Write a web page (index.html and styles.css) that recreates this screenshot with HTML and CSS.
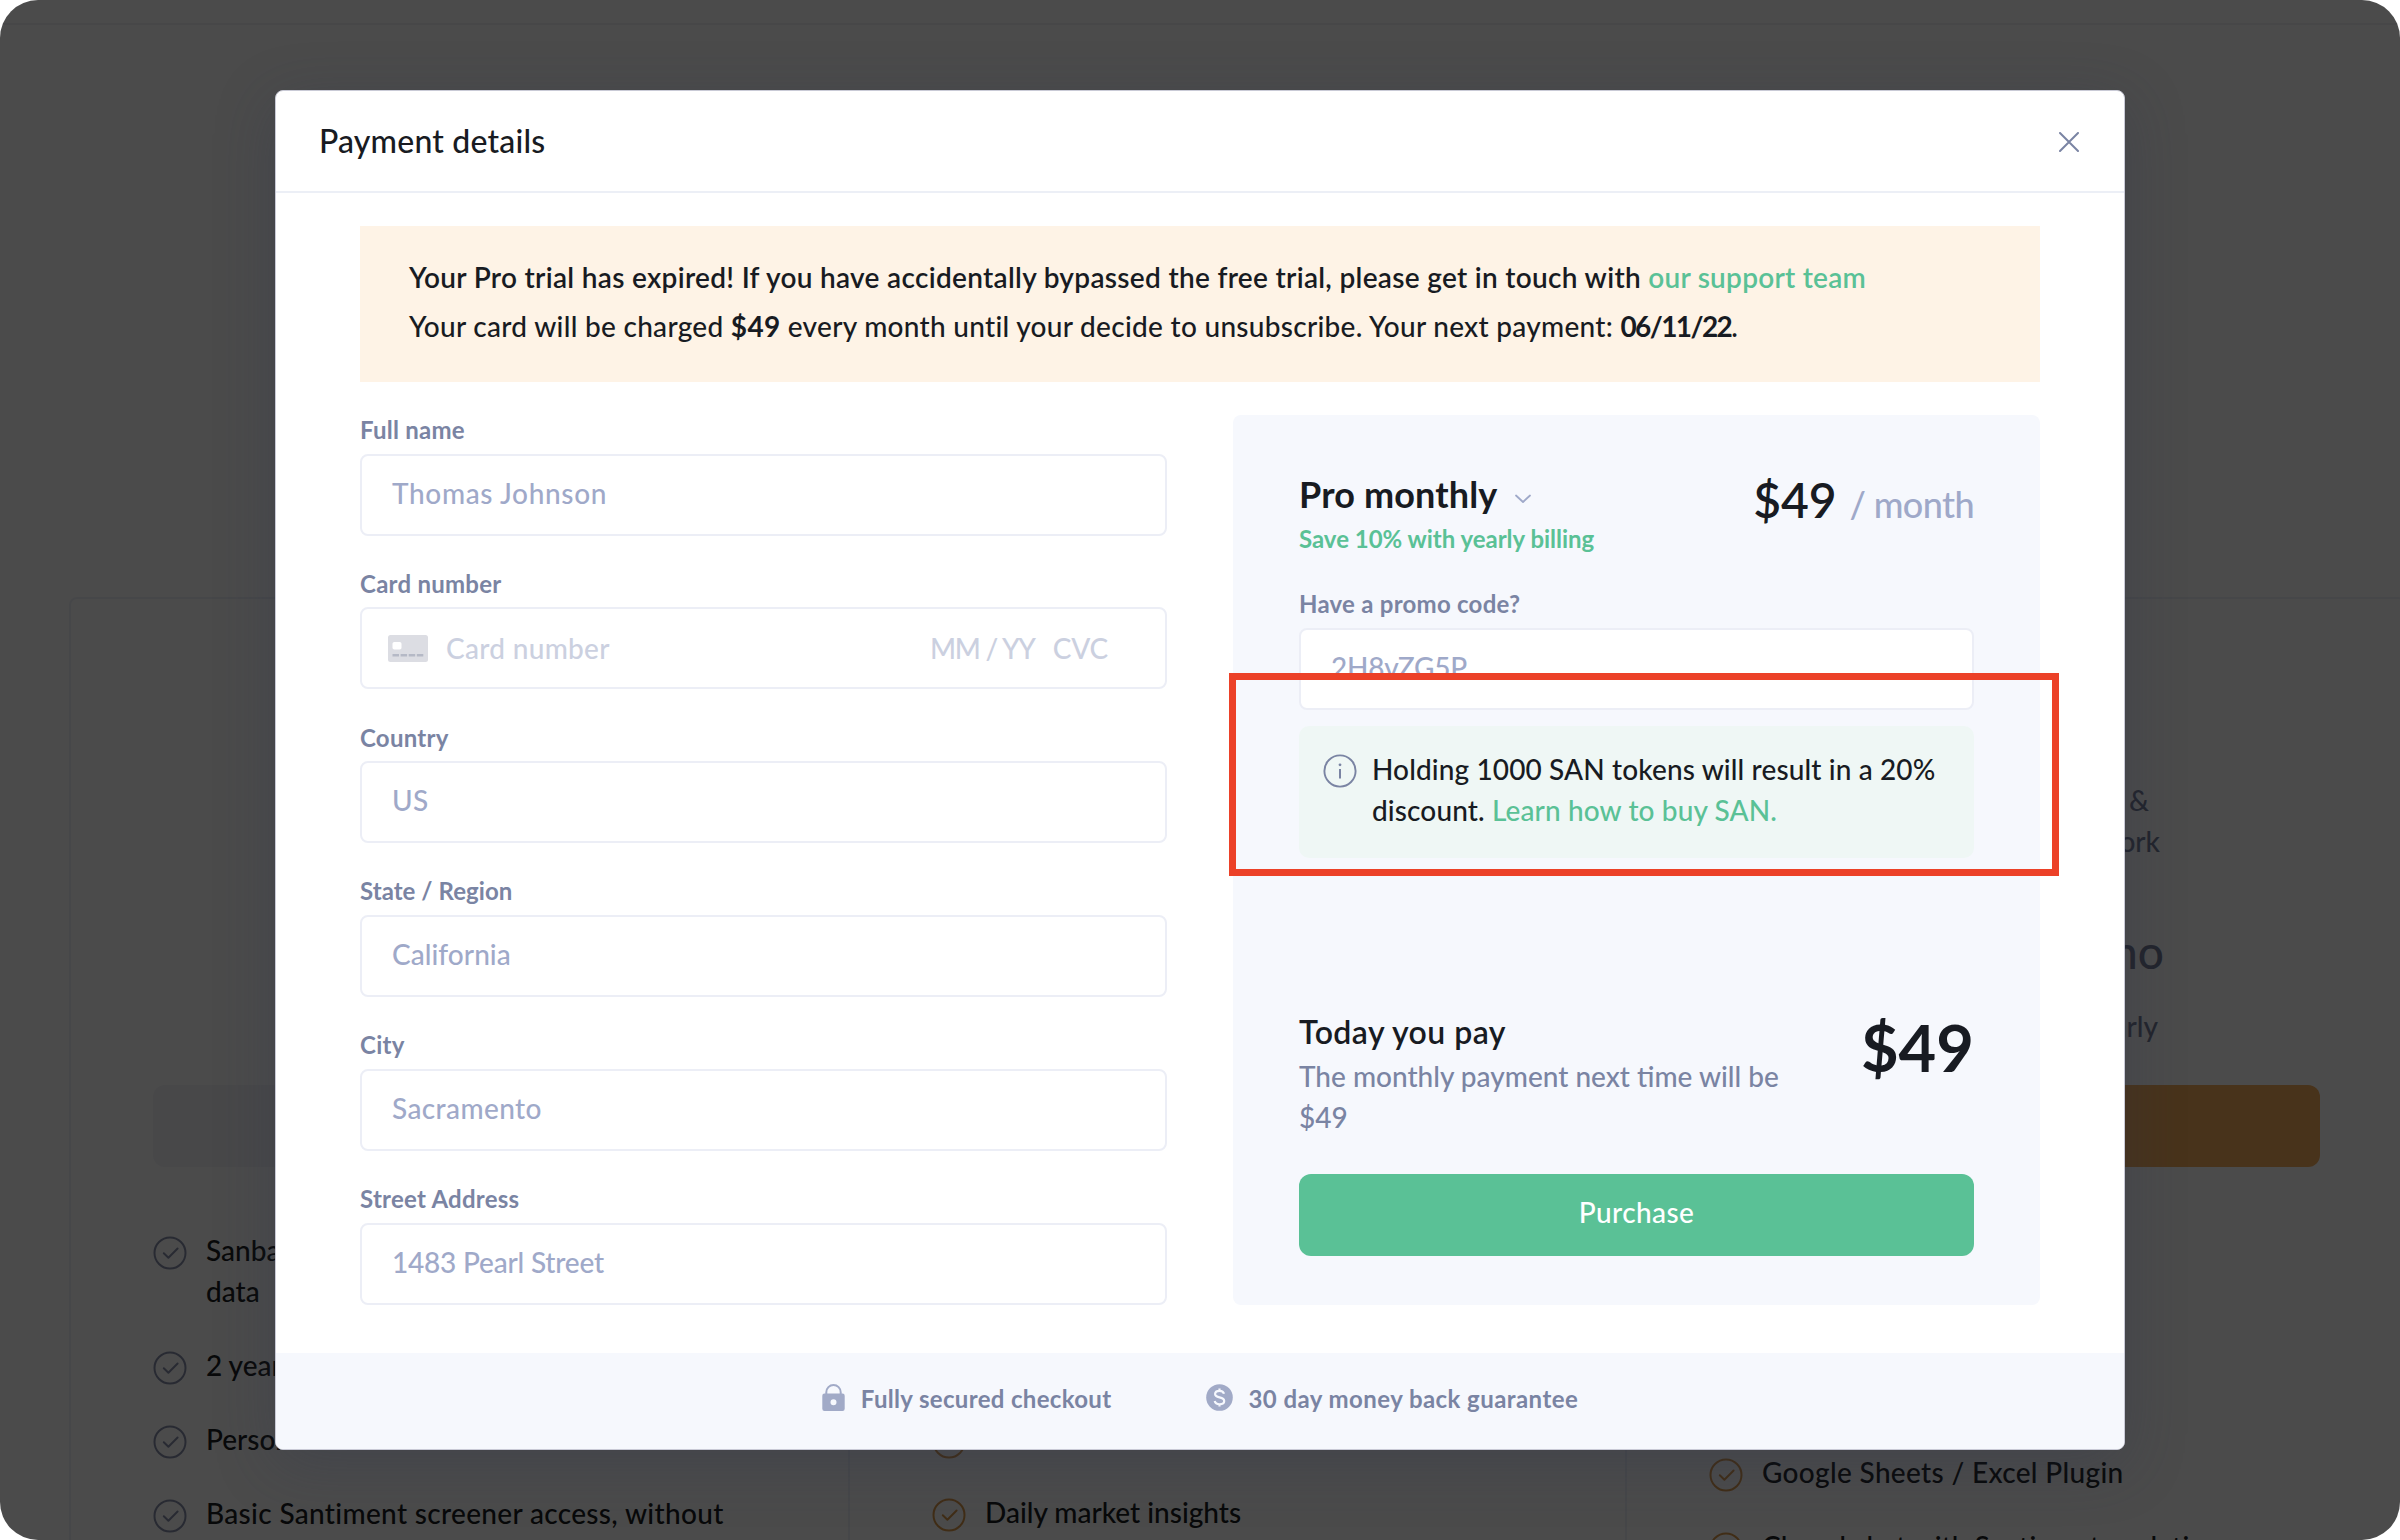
FILE: index.html
```html
<!DOCTYPE html>
<html lang="en">
<head>
<meta charset="utf-8">
<title>Payment details</title>
<link rel="stylesheet" href="styles.css">
</head>
<body>
<svg class="defs" width="0" height="0" aria-hidden="true">
  <symbol id="check" viewBox="0 0 34 34"><circle cx="17" cy="17" r="15.5" fill="none" stroke="currentColor" stroke-width="2"/><path d="M10.8 17.3l4.6 4.4 9.2-9.2" fill="none" stroke="currentColor" stroke-width="2" stroke-linecap="round" stroke-linejoin="round"/></symbol>
</svg>
<div class="stage">
  <div class="page">
    <div class="topbar"></div>
    <div class="plans">
      <section class="plan">
        <div class="plan-head"></div>
        <div class="plan-btn muted"></div>
        <ul class="features">
          <li><svg class="tick"><use href="#check"/></svg><span>Sanbase<br>data</span></li>
          <li><svg class="tick"><use href="#check"/></svg><span>2 years</span></li>
          <li><svg class="tick"><use href="#check"/></svg><span>Personal</span></li>
          <li><svg class="tick"><use href="#check"/></svg><span class="ls-basic">Basic Santiment screener access, without</span></li>
        </ul>
      </section>
      <section class="plan">
        <div class="plan-head"></div>
        <div class="plan-btn accent"></div>
        <ul class="features orange from-third">
          <li><svg class="tick"><use href="#check"/></svg><span></span></li>
          <li><svg class="tick"><use href="#check"/></svg><span>Daily market insights</span></li>
        </ul>
      </section>
      <section class="plan">
        <div class="plan-head">
          <p class="about">&amp;</p>
          <p class="about second">work</p>
          <p class="price-line">demo</p>
          <p class="about billing">yearly</p>
        </div>
        <div class="plan-btn accent"></div>
        <ul class="features orange from-fourth">
          <li><svg class="tick"><use href="#check"/></svg><span class="ls-basic">Google Sheets / Excel Plugin</span></li>
          <li><svg class="tick"><use href="#check"/></svg><span>Closed chat with Santiment analytics</span></li>
        </ul>
      </section>
    </div>
  </div>
  <div class="backdrop">
    <div class="modal">
      <header class="modal-head">
        <h1>Payment details</h1>
        <svg class="close" viewBox="0 0 20 20"><path d="M1 1l18 18M19 1L1 19" fill="none" stroke="#7a84a3" stroke-width="2" stroke-linecap="round"/></svg>
      </header>
      <div class="modal-body">
        <div class="notice">
          <p class="notice-main">Your Pro trial has expired! If you have accidentally bypassed the free trial, please get in touch with <a>our support team</a></p>
          <p class="notice-sub">Your card will be charged <b>$49</b> every month until your decide to unsubscribe. Your next payment: <b class="date">06/11/22</b>.</p>
        </div>
        <div class="columns">
          <form class="fields">
            <div class="field"><label>Full name</label><div class="input name">Thomas Johnson</div></div>
            <div class="field"><label>Card number</label>
              <div class="input card">
                <svg class="card-icon" viewBox="0 0 40 27"><rect width="40" height="27" rx="2.5" fill="#dcdde3"/><rect x="4.500" y="7" width="9" height="7.500" rx="1.800" fill="#fff"/><path d="M4.500 20.200h31" fill="none" stroke="#b5b9c6" stroke-width="2.600" stroke-dasharray="6.500 1.600"/></svg>
                <span class="card-no">Card number</span><span class="card-date">MM / YY</span><span class="card-cvc">CVC</span>
              </div></div>
            <div class="field"><label>Country</label><div class="input">US</div></div>
            <div class="field"><label class="tight">State / Region</label><div class="input tight">California</div></div>
            <div class="field"><label>City</label><div class="input">Sacramento</div></div>
            <div class="field"><label>Street Address</label><div class="input street">1483 Pearl Street</div></div>
          </form>
          <aside class="summary">
            <div class="plan-row">
              <div>
                <div class="plan-name"><span>Pro monthly</span><svg class="chev" viewBox="0 0 16 10"><path d="M1 1.500l7 6.500 7-6.500" fill="none" stroke="#9fa9c9" stroke-width="1.800" stroke-linecap="round" stroke-linejoin="round"/></svg></div>
                <p class="save">Save 10% with yearly billing</p>
              </div>
              <div class="price">$49<span>/ month</span></div>
            </div>
            <div class="field promo"><label>Have a promo code?</label><div class="input code">2H8vZG5P</div></div>
            <div class="info">
              <svg class="info-icon" viewBox="0 0 34 34"><circle cx="17" cy="17" r="15.600" fill="none" stroke="#7a84a3" stroke-width="1.900"/><path d="M17 15v9.500" stroke="#7a84a3" stroke-width="2"/><circle cx="17" cy="10.800" r="1.400" fill="#7a84a3"/></svg>
              <p>Holding 1000 SAN tokens will result in a 20%<br>discount. <a>Learn how to buy SAN.</a></p>
            </div>
            <div class="total">
              <div>
                <h2>Today you pay</h2>
                <p class="next">The monthly payment next time will be<br>$49</p>
              </div>
              <strong>$49</strong>
            </div>
            <button class="buy" type="button">Purchase</button>
          </aside>
        </div>
      </div>
      <footer class="modal-foot">
        <div class="perk">
          <svg class="lock" viewBox="0 0 23 27"><path d="M4.300 11V8.200a7.200 7.200 0 0 1 14.400 0V11" fill="none" stroke="#a1aac7" stroke-width="2"/><path fill-rule="evenodd" d="M2.500 9.600h18a2.200 2.200 0 0 1 2.200 2.200v13a2.200 2.200 0 0 1-2.200 2.200h-18a2.200 2.200 0 0 1-2.200-2.200v-13a2.200 2.200 0 0 1 2.200-2.200zM11.500 15.300a3 3 0 1 0 0 6 3 3 0 0 0 0-6z" fill="#a1aac7"/></svg>
          <span class="perk-a">Fully secured checkout</span>
        </div>
        <div class="perk">
          <svg class="coin" viewBox="0 0 27 27"><circle cx="13.500" cy="13.500" r="13.300" fill="#a1aac7"/><path d="M18 9.800c-.5-2-2.200-3-4.500-3-2.600 0-4.400 1.200-4.400 3.200 0 2.200 2 2.800 4.400 3.400 2.600.6 4.700 1.300 4.700 3.600 0 2-1.900 3.300-4.700 3.300-2.500 0-4.300-1.100-4.800-3.200M13.500 4.500v2.500M13.500 20v2.600" fill="none" stroke="#f6f8fd" stroke-width="2.200"/></svg>
          <span class="perk-b">30 day money back guarantee</span>
        </div>
      </footer>
    </div>
  </div>
  <div class="marker"></div>
</div>
</body>
</html>
```
FILE: styles.css
```css
* { box-sizing: border-box; }
body { margin: 0; background: #fff; font-family: Lato, "Liberation Sans", sans-serif; font-size: 28px; font-weight: 500; color: #181b22; }
h1, h2, p, ul { margin: 0; padding: 0; font-weight: inherit; }
li { list-style: none; }
svg { display: block; flex: none; }
.defs { position: absolute; }
a { color: #5ac196; }

.stage { position: relative; width: 2400px; height: 1540px; overflow: hidden; border-radius: 38px; background: #fcfcfc; }
.page { width: 2406px; }
.topbar { height: 25px; border-bottom: 2px solid #efeff2; }
.plans { display: grid; grid-template-columns: 777px 777px 782px; margin: 572px 0 0 69px; border: 2px solid #eceef4; border-radius: 8px; height: 1000px; }
.plan { padding: 0 84px 0 82px; }
.plan + .plan { border-left: 2px solid #eceef4; }
.plan:last-child { padding-right: 87px; }
.plan-head { height: 486px; padding-top: 181px; text-align: right; color: #737b95; line-height: 41px; }
.about { padding-right: 171px; }
.second { padding-right: 160px; }
.price-line { font-size: 46px; line-height: 60px; margin-top: 60px; padding-right: 156px; }
.billing { margin-top: 24px; padding-right: 162px; }
.plan-btn { height: 82px; border-radius: 12px; }
.muted { background: #f0f0f5; }
.accent { background: #f0aa5a; }
.features { margin-top: 63px; display: flex; flex-direction: column; gap: 33px; line-height: 41px; }
.features li { display: flex; gap: 19px; white-space: nowrap; color: #1c1e24; }
.tick { width: 34px; height: 34px; margin-top: 6px; color: #868da8; }
.orange .tick { color: #d8964a; }
.from-third { margin-top: 252px; }
.from-fourth { margin-top: 285px; }
.ls-basic { letter-spacing: .33px; }

.backdrop { position: absolute; inset: 0; background: rgba(0, 0, 0, .7); padding: 90px 275px; }
.modal { width: 1850px; height: 1360px; border: 1px solid #c9cad6; border-radius: 8px; background: #fff; overflow: hidden; box-shadow: 0 14px 60px rgba(47, 53, 77, .3); }
.modal-head { height: 102px; padding: 0 45px 1px 43px; border-bottom: 2px solid #eceff6; display: flex; align-items: center; justify-content: space-between; }
h1 { font-size: 32px; letter-spacing: .2px; }
.close { width: 20px; height: 20px; margin-top: 2px; }
.modal-body { height: 1160px; padding: 33px 84px 0 84px; }
.notice { height: 156px; background: #fef3e6; padding: 27px 0 0 49px; line-height: 49px; white-space: nowrap; }
.notice-main { font-weight: 600; letter-spacing: .31px; }
.notice-main a { font-weight: 600; letter-spacing: .25px; }
.notice-sub { letter-spacing: .29px; }
.notice-sub b { font-weight: 700; }
.date { letter-spacing: -1.6px; }
.columns { display: grid; grid-template-columns: 807px 807px; gap: 66px; margin-top: 33px; height: 889px; }
.fields { display: flex; flex-direction: column; gap: 33.2px; }
.field label { display: block; height: 38.6px; padding-top: 1px; font-size: 24px; line-height: 28px; font-weight: 700; letter-spacing: .25px; color: #7a84a3; }
.input { height: 82px; border: 2px solid #eceef6; border-radius: 8px; background: #fff; padding: 0 30px 4px; display: flex; align-items: center; color: #9fa9c9; letter-spacing: .4px; }
.name { letter-spacing: .65px; }
.street { letter-spacing: -.2px; }
.field .tight { letter-spacing: .05px; }
.card { padding: 0 57px 0 26px; color: #cbd0e0; }
.card-icon { width: 40px; height: 27px; margin-top: 1px; }
.card-no { margin-left: 18px; letter-spacing: .3px; }
.card-date { margin-left: auto; letter-spacing: -1.2px; }
.card-cvc { margin-left: 18px; letter-spacing: -.2px; }

.summary { background: #f6f8fd; border-radius: 8px; padding: 57px 66px 49px; display: flex; flex-direction: column; }
.plan-row { display: flex; justify-content: space-between; height: 117px; }
.plan-name { display: flex; align-items: center; gap: 17px; font-size: 36px; font-weight: 700; line-height: 44px; letter-spacing: .15px; }
.chev { width: 16px; height: 10px; margin-top: 9px; }
.save { font-size: 24px; line-height: 30px; font-weight: 700; color: #5ac196; margin-top: 8px; letter-spacing: -.02px; }
.price { font-size: 48px; line-height: 58px; margin-top: -1px; letter-spacing: -.1px; font-weight: 600; }
.price span { font-size: 36px; color: #9fa9c9; margin-left: 13px; letter-spacing: -.6px; font-weight: 500; }
.code { letter-spacing: -.2px; }
.info { margin-top: 16px; height: 132px; border-radius: 10px; background: #eff7f5; padding: 23px 0 0 24px; display: flex; gap: 15px; line-height: 41px; white-space: nowrap; }
.info-icon { width: 34px; height: 34px; margin-top: 5px; }
.info p { letter-spacing: .12px; }
.total { margin-top: auto; display: flex; justify-content: space-between; height: 163px; }
h2 { font-size: 32px; line-height: 40px; font-weight: 600; letter-spacing: .45px; padding-top: 1px; }
.next { margin-top: 4px; line-height: 41px; color: #7a84a3; }
.total strong { font-size: 65px; line-height: 64px; font-weight: 700; margin-top: 4px; }
.buy { height: 82px; border: 0; border-radius: 12px; background: #5ac196; color: #fff; font: inherit; letter-spacing: .4px; padding: 0 0 5px; }

.modal-foot { height: 96px; background: #f6f8fd; padding-bottom: 7px; display: flex; align-items: center; justify-content: center; gap: 94px; font-size: 24px; font-weight: 700; color: #7a84a3; }
.perk { display: flex; align-items: center; gap: 16px; }
.perk span { padding-top: 2px; }
.lock { width: 23px; height: 27px; }
.coin { width: 27px; height: 27px; }
.perk-a { letter-spacing: .33px; }
.perk-b { letter-spacing: .43px; }

.marker { position: absolute; left: 1229px; top: 673px; width: 830px; height: 203px; border: 7px solid #ec4128; }
```
